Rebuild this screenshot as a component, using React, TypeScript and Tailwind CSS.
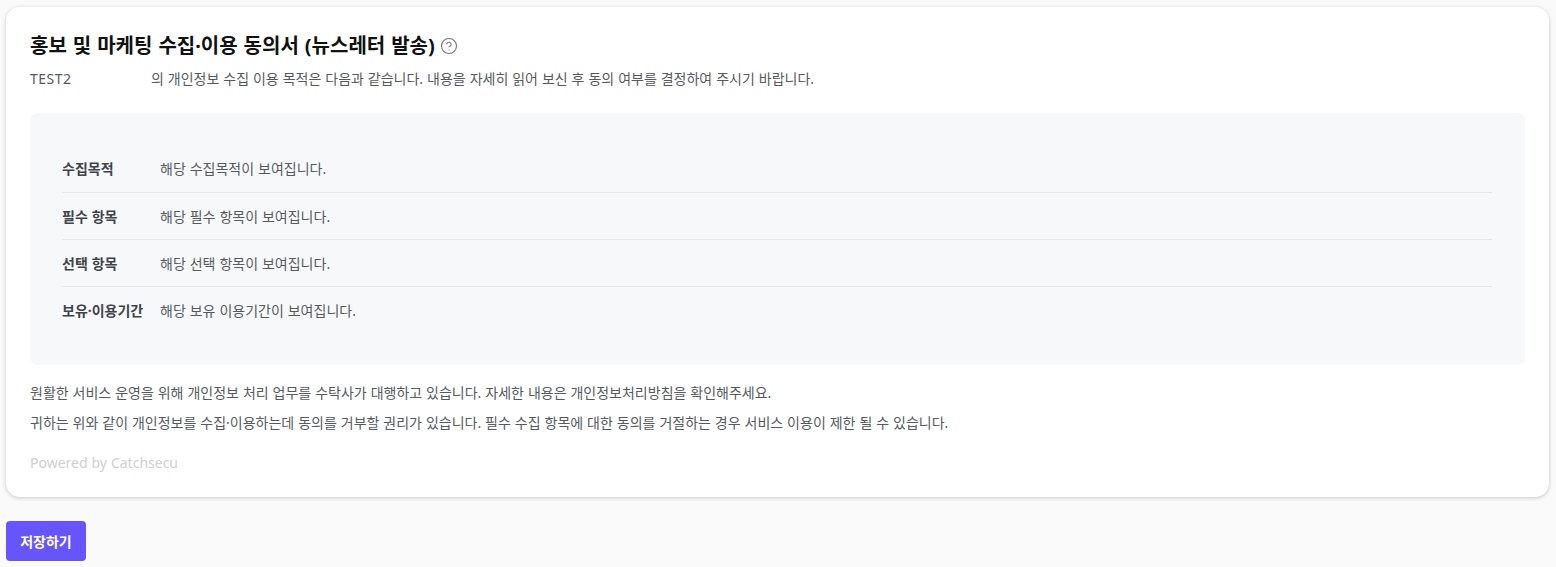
import { CircleHelp } from "lucide-react";

const rows = [
  { label: "수집목적", text: "해당 수집목적이 보여집니다.", cls: "pb-[2px] border-b border-[#e5e7eb]" },
  { label: "필수 항목", text: "해당 필수 항목이 보여집니다.", cls: "border-b border-[#e5e7eb]" },
  { label: "선택 항목", text: "해당 선택 항목이 보여집니다.", cls: "border-b border-[#e5e7eb]" },
  { label: "보유·이용기간", text: "해당 보유 이용기간이 보여집니다.", cls: "" },
];

export default function App() {
  return (
    <div className="min-h-[567px] bg-[#fafafb] pl-[6px] pr-[7px] pt-[7px] font-['Noto_Sans','Noto_Sans_CJK_KR',sans-serif] text-[#555a61] overflow-hidden [word-spacing:0.3px]">
      <div className="bg-white rounded-[14px] h-[490px] px-6 pt-6 shadow-[0_1px_4px_rgba(0,0,0,0.2)]">
        <div className="flex items-center gap-[5px] h-[30px]">
          <h1 className="text-[20px] font-bold text-[#111] leading-[30px] [word-spacing:0.8px]">
            홍보 및 마케팅 수집·이용 동의서 (뉴스레터 발송)
          </h1>
          <CircleHelp className="w-[18px] h-[18px] text-[#777]" strokeWidth={1.5} />
        </div>
        <p className="flex text-[14px] leading-5 mt-[8px]">
          <span className="w-[121px] tracking-[0.5px]">TEST2</span>
          <span>의 개인정보 수집 이용 목적은 다음과 같습니다. 내용을 자세히 읽어 보신 후 동의 여부를 결정하여 주시기 바랍니다.</span>
        </p>

        <div className="mt-[24px] h-[252px] bg-[#f7f8fa] rounded-lg pl-8 pr-[33px] pt-[33px]">
          {rows.map((row) => (
            <div key={row.label} className={`flex items-center h-[47px] text-[14px] ${row.cls}`}>
              <span className="w-[98px] font-bold text-[#3f444b]">{row.label}</span>
              <span>{row.text}</span>
            </div>
          ))}
        </div>

        <p className="text-[14px] leading-5 mt-[18px]">
          원활한 서비스 운영을 위해 개인정보 처리 업무를 수탁사가 대행하고 있습니다. 자세한 내용은 개인정보처리방침을 확인해주세요.
        </p>
        <p className="text-[14px] leading-5 mt-[10px]">
          귀하는 위와 같이 개인정보를 수집·이용하는데 동의를 거부할 권리가 있습니다. 필수 수집 항목에 대한 동의를 거절하는 경우 서비스 이용이 제한 될 수 있습니다.
        </p>
        <p className="text-[14px] leading-5 mt-[20px] text-[#d0d0d2]">Powered by Catchsecu</p>
      </div>

      <button
        type="button"
        className="mt-6 w-20 h-10 rounded bg-[#6655fc] text-white text-[14px] font-bold"
      >
        저장하기
      </button>
    </div>
  );
}
